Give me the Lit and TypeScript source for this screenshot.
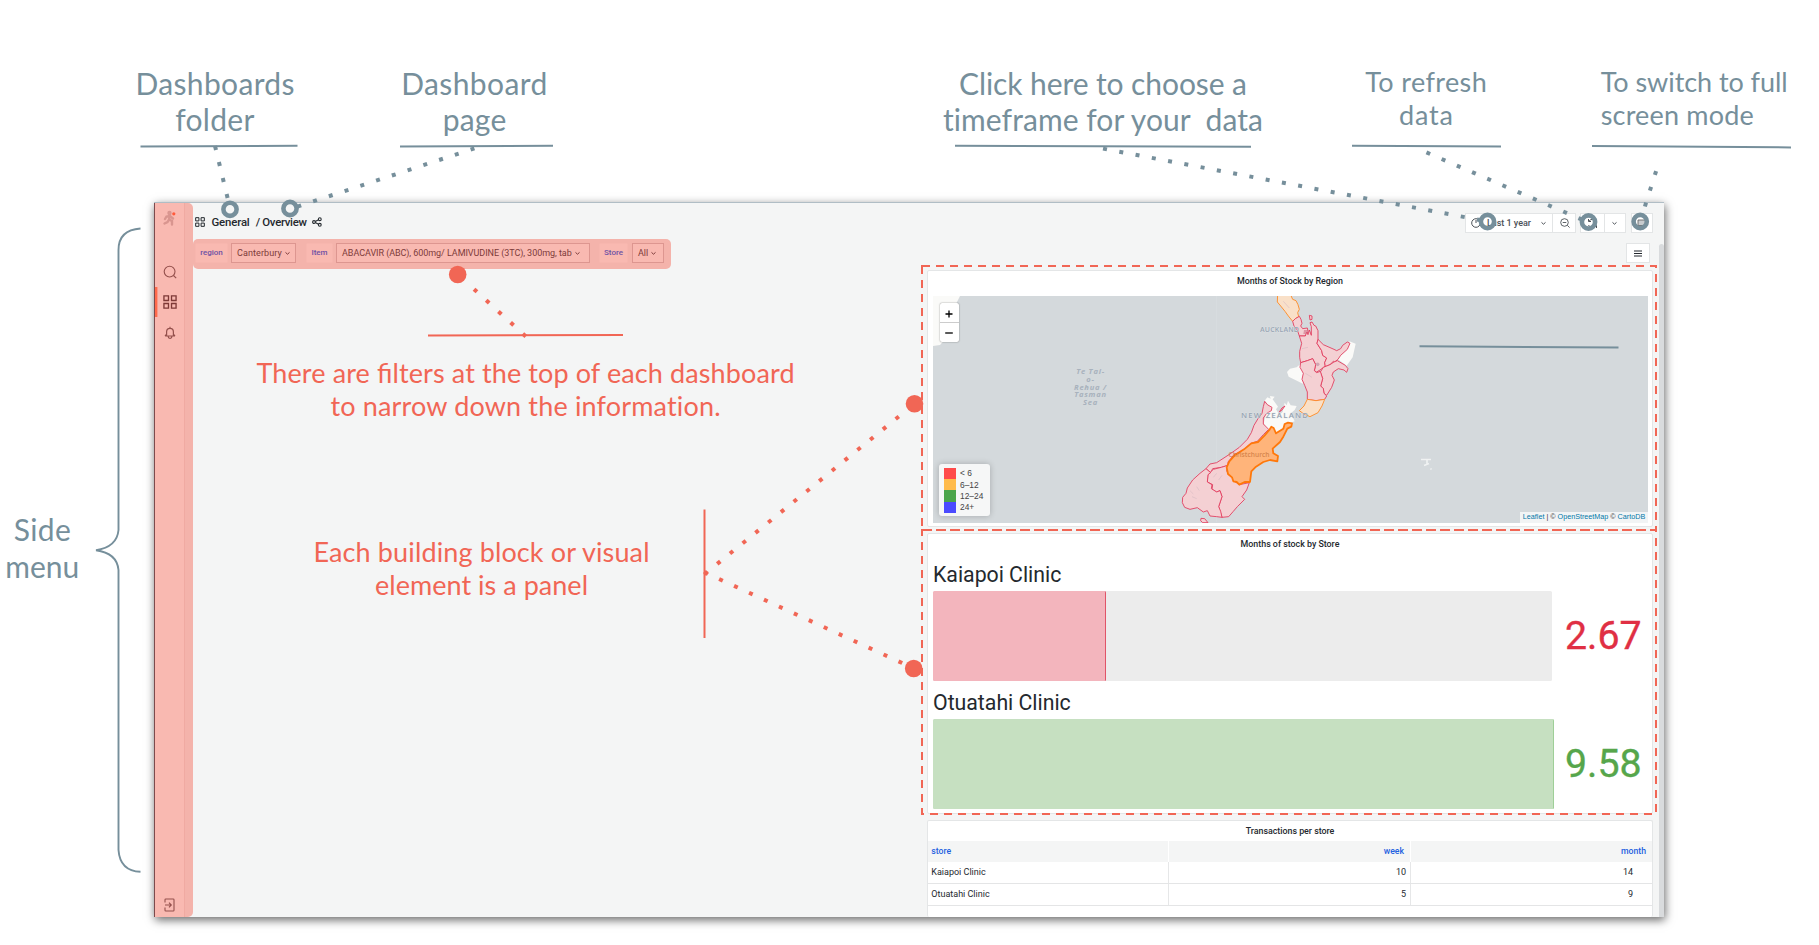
import { LitElement, html, css, svg } from "lit";
import { customElement, property } from "lit/decorators.js";

const chevron = html`<svg width="7" height="7" viewBox="0 0 7 7" fill="none" stroke="currentColor" stroke-width="1"><path d="M1.5 2.4 3.5 4.2 5.5 2.4"/></svg>`;

const apps = (size: number, w: number) => html`<svg width=${size} height=${size} viewBox="0 0 12 12" fill="none" stroke="currentColor" stroke-width=${w}>
  <path d="M.8.8h3.9v3.9H.8zM7.3.8h3.9v3.9H7.3zM.8 7.3h3.9v3.9H.8zM7.3 7.3h3.9v3.9H7.3z"/></svg>`;

@customElement("side-menu")
class SideMenu extends LitElement {
  static styles = css`
    :host { display: flex; width: 39px; box-sizing: border-box; border-left: 1px solid #7d4a4c; background: linear-gradient(90deg, #f9b9b1 0 29px, #f0aaa2 29px 30px, #f4b3ab 30px); border-radius: 0 5px 5px 0; color: #94504c; }
    .items { width: 29px; display: flex; flex-direction: column; align-items: center; }
    .logo { height: 16px; margin-top: 7px; }
    .item { width: 29px; height: 30px; display: flex; align-items: center; justify-content: center; }
    .first { margin-top: 31px; }
    .active { box-shadow: inset 2.4px 0 #ff6a4c; color: #7e3937; }
    .bell { height: 32px; }
    .out { margin-top: auto; margin-bottom: -3px; }
  `;
  render() {
    return html`<div class="items">
      <svg class="logo" width="15" height="16" viewBox="0 0 15 16" fill="none" stroke="#d9958f" stroke-width="2.4" stroke-linecap="round">
        <circle cx="7.5" cy="3" r="1" /><path d="M8 5.5 7 9.5 10 11v3.5M7 9.5 5.5 12 2.5 13.5M8 6 4.5 6.5 3 9M8.5 6.5 11 8.5"/>
        <circle cx="11.8" cy="3.8" r="1.6" fill="#ff5a3c" stroke="none"/></svg>
      <div class="item first"><svg width="14" height="14" viewBox="0 0 14 14" fill="none" stroke="currentColor" stroke-width="1.1"><circle cx="6.6" cy="6.6" r="5.4"/><path d="m10.5 10.5 2.7 2.7"/></svg></div>
      <div class="item active">${apps(14, 1.15)}</div>
      <div class="item bell"><svg width="12" height="14" viewBox="0 0 12 14" fill="none" stroke="currentColor" stroke-width="1.2"><path d="M6 .8v1.4M1 10h10M2.6 10V6a3.4 3.6 0 0 1 6.800 0v4M1 10l1.600-2M11 10 9.400 8M4.200 10.600a1.800 1.800 0 0 0 3.600 0"/></svg></div>
      <div class="item out"><svg width="11" height="14" viewBox="0 0 11 14" fill="none" stroke="currentColor" stroke-width="1.1"><path d="M1 4.6V1.8Q1 1 1.800 1h7.400Q10 1 10 1.800v10.400q0 .8-.8.8H1.800Q1 13 1 12.200V9.400M1 7h6M5 4.700 7.300 7 5 9.300"/></svg></div>
    </div>`;
  }
}

@customElement("filter-bar")
class FilterBar extends LitElement {
  static styles = css`
    :host { display: flex; box-sizing: border-box; width: 478px; height: 30px; padding: 4px 0 0 2px; background: #f4b3ab; border-radius: 5px; font: 9px/20px Roboto, sans-serif; color: #7d3b3a; }
    .label { box-sizing: border-box; height: 20px; background: #f9b9b1; border: 1px solid #f7b6ae; color: #6f51a5; font-weight: 500; font-size: 8px; line-height: 18px; text-align: center; border-radius: 1px; }
    .value { box-sizing: border-box; height: 20px; margin-left: 3px; margin-right: 10px; border: 1px solid #dd9690; background: #f9b9b1; line-height: 17px; padding-left: 5px; display: flex; gap: 2px; align-items: center; white-space: nowrap; font-size: 9px; }
    .l1 { width: 33px; } .v1 { width: 65px; letter-spacing: .1px; }
    .l2 { width: 27px; } .v2 { width: 254px; letter-spacing: -.05px; }
    .l3 { width: 29px; margin-left: -1px; } .v3 { width: 32px; margin-right: 0; margin-left: 4px; }
  `;
  render() {
    return html`
      <div class="label l1">region</div><div class="value v1"><span>Canterbury</span>${chevron}</div>
      <div class="label l2">Item</div><div class="value v2"><span>ABACAVIR (ABC), 600mg/ LAMIVUDINE (3TC), 300mg, tab</span>${chevron}</div>
      <div class="label l3">Store</div><div class="value v3"><span>All</span>${chevron}</div>`;
  }
}

@customElement("stock-map")
class StockMap extends LitElement {
  static styles = css`
    :host { display: block; position: relative; width: 715px; height: 226.5px; margin-left: 5px; font-family: "Liberation Sans", sans-serif; }
    .map { display: block; background: #d4d9dc; }
    .pink { fill: #f4d0d3; stroke: #e23a5c; stroke-width: 2.6; }
    .peach { fill: #f9e0c8; stroke: #ff8d28; stroke-width: 2.8; }
    .land { fill: #fafaf8; }
    .sel { fill: #ffb47a; stroke: #ff780a; stroke-width: 5.4; }
    .name { font-family: "Open Sans", sans-serif; fill: #97a4b3; font-weight: 600; stroke: #e4e8ea; stroke-width: .5; paint-order: stroke; }
    .city { fill: #c9743d; stroke: none; opacity: .75; }
    .sea { font: italic 700 7.6px "Open Sans", sans-serif; fill: #a8b2bd; letter-spacing: .75px; text-anchor: middle; }
    .zoom { position: absolute; left: 6.5px; top: 6.5px; width: 19.5px; background: #fff; border-radius: 2px; box-shadow: 0 0 1.5px rgba(0,0,0,.55); color: #000; }
    .btn { height: 19px; display: flex; align-items: center; justify-content: center; padding-top: 3px; box-sizing: border-box; }
    .btn + .btn { border-top: 1px solid #ccc; padding-top: 2.5px; height: 20px; }
    .legend { position: absolute; left: 6px; bottom: 6.5px; width: 51px; height: 52px; box-sizing: border-box; padding: 3.5px 4.5px; background: #f6f7f7; border-radius: 3px; box-shadow: 0 0 6px rgba(0,0,0,.22); color: #444; font-size: 8.4px; }
    .row { display: flex; align-items: center; gap: 4.5px; height: 11.4px; white-space: nowrap; }
    .sw { width: 12px; height: 11.4px; }
    .red { background: #ff4b4b; } .amber { background: #ffbb4b; } .green { background: #4ba54b; } .blue { background: #4b4bff; }
    .credit { position: absolute; right: 0; bottom: 0; height: 10.5px; width: 128px; box-sizing: border-box; text-align: center; background: #f2f4f5; font-size: 7.2px; line-height: 10px; white-space: nowrap; color: #333; letter-spacing: 0; }
    .link { color: #0078a8; }
  `;
  render() {
    return html`
      <svg class="map" width="715" height="226.5" viewBox="933 296 715 226.5">
        <path class="land" d="M933 296h27l-4 8-6 30-10 11-7 1z"/>
        <path d="M1216.500 296v226" stroke="#d8dde0" stroke-width=".6"/>
        <text class="sea" x="1090.500" y="373.500">Te Tai-</text><text class="sea" x="1090.500" y="381.500">o-</text>
        <text class="sea" x="1090.500" y="389.500">Rehua /</text><text class="sea" x="1090.500" y="397.300">Tasman</text>
        <text class="sea" x="1090.500" y="405">Sea</text>
        <g transform="translate(1150 280) scale(.33333)" stroke-linejoin="round">
          <path class="land" d="M454 250 458 262 460 280 456 296 460 312 436 300 416 290 411 276 420 266 440 262zM598 184 617 191 608 232 590 257 564 238 572 226 592 208z"/>
          <path class="land" d="M344 362 352 352 362 356 360 348 374 350 368 358 384 380 378 388 388 404 398 396 404 368 410 376 414 362 422 376 440 378 434 390 420 402 428 412 434 424 412 432 380 460 364 440 354 450 341 430 348 402 366 388z"/>
          <path class="peach" d="M383 40 382 66 392 78 405 94 415 108 428 124 436 116 446 110 443 98 448 88 444 74 438 62 428 58 420 40z"/>
          <path class="pink" d="M428 124 436 116 448 109 453 118 456 130 452 138 458 146 472 144 474 154 466 168 448 168 442 150 432 138z"/>
          <path class="pink" d="M448 168 466 168 470 156 474 164 478 150 484 166 484 140 480 128 486 126 492 136 497 138 504 152 504 178 501 190 515 212 518 226 530 234 524 248 526 258 510 270 500 276 493 272 497 254 488 236 472 242 452 248 449 232 449 214 455 190z"/>
          <path class="pink" d="M504 178 520 194 552 208 560 212 572 206 578 196 592 186 600 190 592 208 572 226 564 238 554 246 550 244 540 254 526 260 524 248 530 234 518 226 515 212 501 190z"/>
          <path class="pink" d="M520 262 540 254 552 246 562 242 586 256 594 266 590 277 582 270 565 266 550 276 546 286 553 300 545 322 530 346 522 340 520 326 512 318 518 296 511 276z"/>
          <path class="pink" d="M452 248 472 242 488 236 497 254 493 272 500 278 511 274 518 296 512 318 520 326 522 340 530 348 524 358 498 362 472 358 472 336 464 316 456 298 460 280 450 262z"/>
          <path class="peach" d="M472 358 498 362 524 358 516 378 504 398 480 410 462 402 448 392 462 378z"/>
          <path class="pink" d="M478 106 486 108 486 118 480 120zM388 396 396 384 405 378 396 390z"/>
          <path class="pink" d="M344 364 352 374 366 382 364 392 350 400 340 414 340 432 356 448 340 464 322 484 302 490 280 510 252 524 234 546 234 556 214 562 188 566 182 578 168 566 180 552 200 548 240 522 268 502 292 478 304 458 312 436 324 416 336 400 340 380z"/>
          <path class="pink" d="M182 576 190 568 214 562 234 556 230 572 236 584 248 592 254 604 268 614 298 608 290 630 276 650 284 658 262 680 250 694 236 710 216 712 210 692 206 680 216 650 210 632 200 636 186 628 188 614 172 606 174 582z"/>
          <path class="pink" d="M168 566 182 578 174 584 172 606 186 614 184 626 200 636 210 632 216 650 206 680 212 694 216 712 200 710 180 708 172 692 160 696 142 683 120 688 104 682 97 668 98 652 108 640 112 624 128 600 150 580zM153 715 164 716 174 728 158 728 152 722z"/>
          <path d="M120 632l10 10M140 620l8 12M126 650l14 6M190 592l10-12M206 600l10-14M262 560l-6 26M290 556l-24 10M400 64l18 20M456 206l18-4M466 280l20 12" stroke="#d9bdc4" stroke-width="2"/>
          <circle cx="503" cy="253" r="5.500" fill="#d0a6b4"/>
          <path d="M462 150h12l-4 12h-10z" fill="#cf6f86" opacity=".6"/>
          <path class="sel" d="M364 440 371 444 378 460 400 446 404 432 414 428 426 430 424 440 412 446 400 470 390 486 368 506 370 520 384 528 382 544 360 540 340 546 318 560 304 574 300 606 284 606 268 614 260 606 250 604 246 592 234 582 230 562 238 544 254 526 282 508 304 490 324 486 344 466 358 450z"/>
        </g>
        <text class="name" x="1260" y="331.800" font-size="7" textLength="39">AUCKLAND</text>
        <text class="name" x="1241" y="417.500" font-size="7.800" textLength="67">NEW ZEALAND</text>
        <text class="name city" x="1228.500" y="457" font-size="6.600" textLength="41">Christchurch</text>
        <path d="M1421 459.500h10M1427 459v6M1430.500 468.500l1 1M1424 465.500l5-2" stroke="#f5f7f7" stroke-width="1.700" opacity=".85"/>
      </svg>
      <div class="zoom">
        <div class="btn"><svg width="8" height="8" viewBox="0 0 8 8" stroke="#000" stroke-width="1.300"><path d="M4 .5v7M.5 4h7"/></svg></div>
        <div class="btn"><svg width="8" height="8" viewBox="0 0 8 8" stroke="#000" stroke-width="1.300"><path d="M.2 4h7.600"/></svg></div>
      </div>
      <div class="legend">
        <div class="row"><span class="sw red"></span>&lt; 6</div><div class="row"><span class="sw amber"></span>6–12</div>
        <div class="row"><span class="sw green"></span>12–24</div><div class="row"><span class="sw blue"></span>24+</div>
      </div>
      <div class="credit"><span class="link">Leaflet</span> | © <span class="link">OpenStreetMap</span> © <span class="link">CartoDB</span></div>`;
  }
}

@customElement("bar-gauge")
class BarGauge extends LitElement {
  @property() name = "";
  @property() value = "";
  @property() tone = "";
  @property({ type: Number }) size = 0;
  static styles = css`
    :host { display: block; height: 128px; margin-left: 5px; }
    .name { height: 37px; box-sizing: border-box; padding-top: 2px; font: 21.3px/37px Roboto, sans-serif; color: #24292e; letter-spacing: -.02px; }
    .line { display: flex; height: 90px; }
    .track { width: 619px; background: #ececec; border-radius: 1.5px; }
    .fill { height: 90px; box-sizing: border-box; border-radius: 1.5px; }
    .red { background: #f3b5bd; border-right: 1px solid #e05468; }
    .green { background: #c6e0c1; border-right: 1.6px solid #9fcf98; }
    .value { width: 76px; margin-left: 13px; font: 39.3px/90px Roboto, sans-serif; -webkit-text-stroke: .35px currentColor; }
    .vred { color: #e02f44; } .vgreen { color: #56a64b; }
  `;
  render() {
    return html`<div class="name">${this.name}</div>
      <div class="line"><div class="track"><div class="fill ${this.tone}" style="width:${this.size}px"></div></div>
      <div class="value v${this.tone}">${this.value}</div></div>`;
  }
}

@customElement("store-table")
class StoreTable extends LitElement {
  static styles = css`
    :host { display: block; font: 9px/20px Roboto, sans-serif; color: #24292e; }
    .row { display: grid; grid-template-columns: 241px 241.500px 1fr; height: 22px; box-sizing: border-box; border-bottom: 1px solid #e4e5e6; }
    .head { background: #f4f5f5; color: #1f62e0; font-weight: 500; height: 20.500px; border: 0; font-size: 8.700px; }
    .cell { border-right: 1px solid #e6e7e8; padding: 0 3.500px; text-align: right; }
    .head .cell { border-color: #fff; padding: 0 5.500px 0 4px; }
    .row .cell:first-child { text-align: left; padding-left: 3.300px; }
    .cell:last-child { border-right: 0; padding-right: 19px; }
    .head .cell:last-child { padding-right: 6px; }
  `;
  render() {
    const rows = [["Kaiapoi Clinic", 10, 14], ["Otuatahi Clinic", 5, 9]];
    return html`<div class="row head"><div class="cell">store</div><div class="cell">week</div><div class="cell">month</div></div>
      ${rows.map((r) => html`<div class="row">${r.map((c) => html`<div class="cell">${c}</div>`)}</div>`)}`;
  }
}

const ink = "#768f9b";
const coral = "#f16655";

@customElement("callout-layer")
class CalloutLayer extends LitElement {
  static styles = css`
    :host { position: absolute; inset: 0; pointer-events: none; }
    .layer { display: block; font-family: Lato, sans-serif; }
    .ring { stroke: #768f9b; stroke-width: 4.600; fill: none; }
    .note { fill: #768f9b; text-anchor: middle; }
    .left { text-anchor: start; }
    .warm { fill: #f16655; text-anchor: middle; }
    .plain { font-variant-ligatures: none; }
    .frame { fill: none; stroke: #f16655; stroke-width: 2; stroke-dasharray: 8 6; }
  `;
  line(x1: number, y1: number, x2: number, y2: number, color = ink) {
    return svg`<line x1=${x1} y1=${y1} x2=${x2} y2=${y2} stroke=${color} stroke-width="2"/>`;
  }
  dots(x: number, y: number, dx: number, dy: number, n: number, color = ink, s = 4) {
    const a = (Math.atan2(dy, dx) * 180) / Math.PI;
    return Array.from({ length: n }, (_, i) =>
      svg`<rect x=${-s / 2} y=${-s / 2} width=${s} height=${s} fill=${color} transform="translate(${x + dx * i} ${y + dy * i}) rotate(${a})"/>`);
  }
  text(cls: string, x: number, y: number, size: number, w: number, t: string) {
    return svg`<text class=${cls} x=${x} y=${y} font-size=${size} textLength=${w} xml:space="preserve">${t}</text>`;
  }
  render() {
    return html`<svg class="layer" width="1819" height="945" viewBox="0 0 1819 945">
      ${this.text("note", 215, 94.700, 30, 159, "Dashboards")}
      ${this.text("note", 214.8, 130.900, 30, 79, "folder")}
      ${this.text("note", 474.200, 94.700, 30, 146, "Dashboard")}
      ${this.text("note", 474.500, 130.900, 30, 63.500, "page")}
      ${this.text("note", 1103, 94.700, 30, 288, "Click here to choose a")}
      ${this.text("note plain", 1103, 130.900, 30, 320, "timeframe for your\u00a0 data")}
      ${this.text("note", 1426, 91.700, 27, 121.500, "To refresh")}
      ${this.text("note", 1426, 124.900, 27, 54, "data")}
      ${this.text("note left", 1600.700, 91.700, 27, 187, "To switch to full")}
      ${this.text("note left", 1600.700, 124.900, 27, 153, "screen mode")}
      ${this.text("note", 42.300, 541, 30, 57, "Side")}
      ${this.text("note", 42.300, 577.800, 30, 74, "menu")}
      ${this.text("warm", 525.500, 382.800, 27, 538, "There are filters at the top of each dashboard")}
      ${this.text("warm plain", 525.500, 415.800, 27, 390, "to narrow down the information.")}
      ${this.text("warm", 481.500, 561.800, 27, 336, "Each building block or visual")}
      ${this.text("warm", 481.500, 594.800, 27, 213, "element is a panel")}
      ${this.line(140.500, 146.500, 297.500, 145.800)}
      ${this.line(400, 146.500, 553, 145.800)}
      ${this.line(955, 145.800, 1251, 146.800)}
      ${this.line(1352, 145.800, 1501, 146.600)}
      ${this.line(1592, 145.900, 1791, 147.400)}
      ${this.line(1419.500, 346.200, 1618.500, 347.500)}
      ${this.line(428, 335.500, 623, 335, coral)}
      ${this.line(704.500, 509.500, 704.500, 638, coral)}
      ${this.dots(215.500, 148, 3.870, 16, 4)}
      ${this.dots(472.500, 149, -15.750, 5.180, 12)}
      ${this.dots(1105, 149, 16.260, 3.080, 24)}
      ${this.dots(1428.300, 153.200, 15.200, 6.570, 11)}
      ${this.dots(1655.500, 173, -5, 15.800, 3)}
      ${this.dots(475.500, 290.500, 12.200, 11.150, 5, coral)}
      ${this.dots(706, 573, 12.750, -10.350, 16, coral)}
      ${this.dots(706, 573, 14.950, 6.860, 14, coral)}
      ${[[230, 209.300], [290, 208.500], [1487.500, 221.500], [1588.500, 222], [1640.200, 221.500]].map(([x, y]) => svg`<circle class="ring" cx=${x} cy=${y} r="6.600"/>`)}
      ${[[457.700, 274.500], [914.500, 403.700], [913.700, 668.500]].map(([x, y]) => svg`<circle cx=${x} cy=${y} r="8.800" fill=${coral}/>`)}
      <path d="M140.500 228.500Q118.500 230 118.500 250V530Q117 547 96 550.200Q117 553 118.500 570V850Q120 871 140.500 871.800" fill="none" stroke=${ink} stroke-width="1.900"/>
      <path class="frame" d="M922 266H1656V530H922z"/>
      <path class="frame" d="M922 530H1656V814H922z"/>
    </svg>`;
  }
}

@customElement("app-root")
export class AppRoot extends LitElement {
  static styles = css`
    :host { display: block; position: relative; width: 1819px; height: 945px; box-sizing: border-box; padding: 202px 0 0 154px; background: #fff; overflow: hidden; }
    .window { display: flex; width: 1510px; height: 715px; box-sizing: border-box; background: #f4f5f5; border-top: 1px solid #b0bdc5; box-shadow: 1px 3px 9px rgba(0,0,0,.6); font-family: Roboto, sans-serif; color: #24292e; }
    .main { flex: 1; display: flex; flex-direction: column; }
    .top { display: flex; align-items: center; height: 36px; padding: 0 11px 0 2px; box-sizing: border-box; }
    .crumbs { display: flex; align-items: center; padding-top: 2px; font: 500 11.400px/16px Roboto, sans-serif; letter-spacing: -.15px; }
    .folder { margin-left: 6.500px; } .page { margin: 0 5px 0 6px; letter-spacing: -.3px; }
    .tools { margin-left: auto; margin-top: 4px; display: flex; }
    .tool { height: 20px; box-sizing: border-box; border: 1px solid #e3e5e6; background: #fff; display: flex; align-items: center; justify-content: center; color: #4c5157; font: 500 9px/18px Roboto, sans-serif; }
    .time { width: 88px; gap: 6px; } .time span { margin-right: 3px; } .out { width: 23px; border-left: 0; padding-left: 2px; }
    .fresh { width: 25px; margin-left: 3.500px; } .drop { width: 21.500px; border-left: 0; } .tv { width: 22px; margin-left: 5px; }
    .sub { display: flex; height: 31px; justify-content: space-between; padding-right: 14px; }
    .menu { width: 24px; margin-top: 4px; }
    .area { display: flex; justify-content: flex-end; flex: 1; }
    .panels { display: flex; flex-direction: column; gap: 6px; width: 726px; margin-right: 6px; }
    .panel { box-sizing: border-box; border: 1px solid #e4e6e7; background: #fff; border-radius: 2px; }
    .title { text-align: center; font: 500 8.900px/20px Roboto, sans-serif; height: 25px; letter-spacing: -.02px; }
    .p1 { height: 257px; } .p2 { height: 281px; } .p3 { height: 97px; border-bottom: 0; }
    .p2 .title { height: 20px; } .p3 .title { height: 20px; }
    .scroll { width: 5px; margin-top: -26px; background: #d9dbdd; border-radius: 3px 3px 0 0; }
  `;
  render() {
    return html`
      <div class="window">
        <side-menu></side-menu>
        <div class="main">
          <div class="top">
            <div class="crumbs">${apps(10, 1.2)}<span class="folder">General</span><span class="page">/ Overview</span>
              <svg width="10" height="10" viewBox="0 0 10 10" fill="none" stroke="currentColor" stroke-width="1.100"><circle cx="2" cy="5" r="1.400"/><circle cx="7.800" cy="2.200" r="1.400"/><circle cx="7.800" cy="7.800" r="1.400"/><path d="m3.300 4.400 3.200-1.600M3.300 5.600l3.200 1.600"/></svg>
            </div>
            <div class="tools">
              <div class="tool time"><svg width="10" height="10" viewBox="0 0 10 10" fill="none" stroke="currentColor"><circle cx="5" cy="5" r="4.300"/><path d="M5 2v3"/></svg><span>Last 1 year</span>${chevron}</div>
              <div class="tool out"><svg width="10" height="10" viewBox="0 0 10 10" fill="none" stroke="currentColor" stroke-width=".9"><circle cx="4.500" cy="4.500" r="3.800"/><path d="M2.700 4.500h3.600M7.400 7.400l2.200 2.200"/></svg></div>
              <div class="tool fresh"><svg width="11" height="11" viewBox="0 0 11 11" fill="none" stroke="currentColor"><path d="M9.500 4A4.300 4.300 0 0 0 2 3.200M1.500 1v2.500H4M1.500 7A4.300 4.300 0 0 0 9 7.800M9.500 10V7.500H7"/></svg></div>
              <div class="tool drop">${chevron}</div>
              <div class="tool tv"><svg width="10" height="9" viewBox="0 0 10 9" fill="#c8cccf" stroke="#666" stroke-width=".9"><path d="M1 1h8v5.500H1zM2.500 8.300h5"/></svg></div>
            </div>
          </div>
          <div class="sub"><filter-bar></filter-bar>
            <div class="tool menu"><svg width="8" height="7" viewBox="0 0 8 7" stroke="#24292e" stroke-width="1.100"><path d="M0 1h8M0 3.500h8M0 6h8"/></svg></div>
          </div>
          <div class="area">
            <div class="panels">
              <div class="panel p1"><div class="title">Months of Stock by Region</div><stock-map></stock-map></div>
              <div class="panel p2"><div class="title">Months of stock by Store</div>
                <bar-gauge name="Kaiapoi Clinic" value="2.67" tone="red" size="173"></bar-gauge>
                <bar-gauge name="Otuatahi Clinic" value="9.58" tone="green" size="621"></bar-gauge>
              </div>
              <div class="panel p3"><div class="title">Transactions per store</div><store-table></store-table></div>
            </div>
            <div class="scroll"></div>
          </div>
        </div>
      </div>
      <callout-layer></callout-layer>`;
  }
}
